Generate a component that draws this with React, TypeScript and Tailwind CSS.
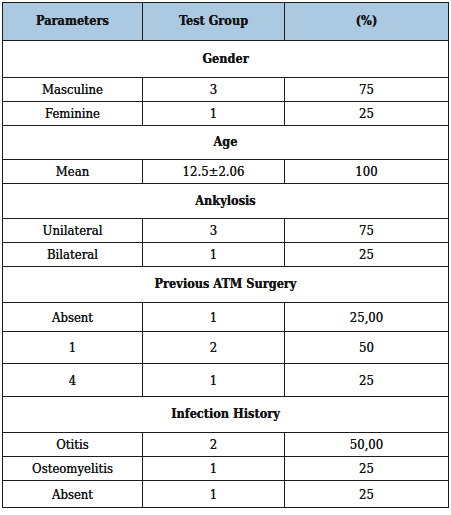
type Row = { kind: 'section'; label: string; h: number } | { kind: 'data'; cells: [string, string, string]; h: number }

const rows: Row[] = [
  { kind: 'section', label: 'Gender', h: 37 },
  { kind: 'data', cells: ['Masculine', '3', '75'], h: 24 },
  { kind: 'data', cells: ['Feminine', '1', '25'], h: 24 },
  { kind: 'section', label: 'Age', h: 34 },
  { kind: 'data', cells: ['Mean', '12.5±2.06', '100'], h: 24 },
  { kind: 'section', label: 'Ankylosis', h: 35 },
  { kind: 'data', cells: ['Unilateral', '3', '75'], h: 24 },
  { kind: 'data', cells: ['Bilateral', '1', '25'], h: 24 },
  { kind: 'section', label: 'Previous ATM Surgery', h: 36 },
  { kind: 'data', cells: ['Absent', '1', '25,00'], h: 29 },
  { kind: 'data', cells: ['1', '2', '50'], h: 32 },
  { kind: 'data', cells: ['4', '1', '25'], h: 33 },
  { kind: 'section', label: 'Infection History', h: 36 },
  { kind: 'data', cells: ['Otitis', '2', '50,00'], h: 24 },
  { kind: 'data', cells: ['Osteomyelitis', '1', '25'], h: 24 },
  { kind: 'data', cells: ['Absent', '1', '25'], h: 27 },
]

export default function App() {
  return (
    <div
      className="min-h-screen bg-white pt-[2px] pl-[2px] text-[#141414] [text-shadow:0_0_0.4px_#141414]"
      style={{ fontFamily: '"DejaVu Serif Condensed", "DejaVu Serif", "Liberation Serif", serif' }}
    >
      <table className="w-[446px] table-fixed border-collapse text-[13px] leading-none">
        <colgroup>
          <col className="w-[140px]" />
          <col className="w-[142px]" />
          <col className="w-[164px]" />
        </colgroup>
        <thead>
          <tr className="h-[38px] bg-[#abcae1] text-[12.6px] font-bold">
            <th className="border border-[#1c1c1c] text-center">Parameters</th>
            <th className="border border-[#1c1c1c] text-center">Test Group</th>
            <th className="border border-[#1c1c1c] text-center">(%)</th>
          </tr>
        </thead>
        <tbody>
          {rows.map((r, i) =>
            r.kind === 'section' ? (
              <tr key={i} style={{ height: r.h }}>
                <td colSpan={3} className="border border-[#1c1c1c] text-center text-[12.6px] font-bold">
                  {r.label}
                </td>
              </tr>
            ) : (
              <tr key={i} style={{ height: r.h }}>
                {r.cells.map((c, j) => (
                  <td key={j} className="border border-[#1c1c1c] text-center">
                    {c}
                  </td>
                ))}
              </tr>
            )
          )}
        </tbody>
      </table>
    </div>
  )
}
